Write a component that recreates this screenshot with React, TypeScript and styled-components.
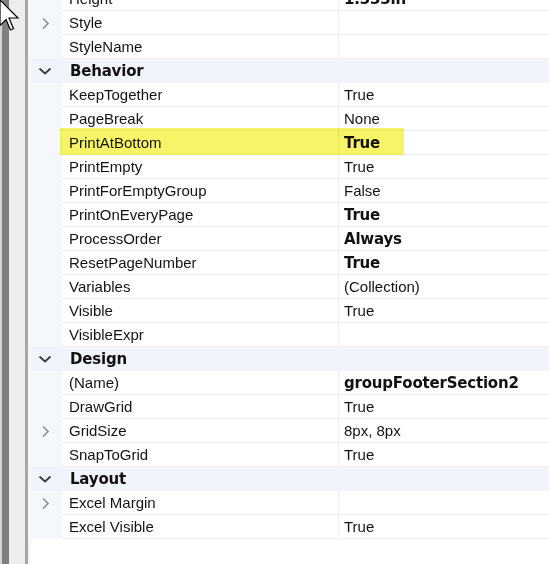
import React from "react";
import styled, { createGlobalStyle } from "styled-components";

const GlobalStyle = createGlobalStyle`
    html, body {
        margin: 0;
        padding: 0;
        background: #fff;
    }
    body {
        font-family: "Liberation Sans", Arial, sans-serif;
        font-size: 15px;
        color: #141414;
    }
`;

const Page = styled.div`
    display: flex;
    width: 549px;
    height: 564px;
    overflow: hidden;
    position: relative;
    background: #fff;
`;

const SideStrip = styled.div`
    flex: 0 0 31px;
    background: linear-gradient(
        to right,
        #d4d4d4 0 2px,
        #7f7f7f 2px 9px,
        #ededed 9px 25px,
        #a6a6a6 25px 28px,
        #f6f6f6 28px 31px
    );
`;

const Grid = styled.div`
    flex: 1;
    position: relative;
    overflow: hidden;
`;

const List = styled.div`
    margin-top: -13px;
`;

const Row = styled.div<{ category?: boolean }>`
    display: grid;
    grid-template-columns: 31px 277px 1fr;
    height: 24px;
    line-height: 24px;
    background: ${p => (p.category ? "#f1f5fb" : "#fff")};
    white-space: nowrap;
`;

const Gutter = styled.div`
    background: #f4f7fc;
    display: flex;
    align-items: center;
    justify-content: center;
    padding-right: 2px;
`;

const CategoryGutter = styled(Gutter)`
    background: transparent;
    padding-right: 4px;
`;

const NameCell = styled.div`
    padding-left: 7px;
    border-bottom: 1px solid #f0f1f3;
    border-right: 1px solid #eeeff2;
    overflow: hidden;
`;

const ValueCell = styled.div<{ bold?: boolean }>`
    padding-left: 5px;
    border-bottom: 1px solid #f0f1f3;
    overflow: hidden;
    ${p =>
        p.bold &&
        `
        font-family: "DejaVu Sans", Verdana, sans-serif;
        font-weight: bold;
        font-size: 15px;
        color: #111;
        letter-spacing: -0.2px;
    `}
`;

const CategoryName = styled.div`
    grid-column: 2 / 4;
    padding-left: 8px;
    font-family: "DejaVu Sans", Verdana, sans-serif;
    font-weight: bold;
    font-size: 15px;
    color: #111;
    letter-spacing: -0.2px;
`;

const Highlight = styled.div`
    position: absolute;
    left: 29px;
    top: 128px;
    width: 344px;
    height: 27px;
    background: #f8f35a;
    mix-blend-mode: multiply;
    filter: blur(0.6px);
    opacity: 0.92;
    pointer-events: none;
`;

const Cursor = styled.svg`
    position: absolute;
    left: -1px;
    top: -1px;
    pointer-events: none;
`;

type Prop = {
    name: string;
    value?: string;
    bold?: boolean;
    expandable?: boolean;
};

type Category = {
    title?: string;
    items: Prop[];
};

const sections: Category[] = [
    {
        items: [
            { name: "Height", value: "1.333in", bold: true },
            { name: "Style", expandable: true },
            { name: "StyleName" },
        ],
    },
    {
        title: "Behavior",
        items: [
            { name: "KeepTogether", value: "True" },
            { name: "PageBreak", value: "None" },
            { name: "PrintAtBottom", value: "True", bold: true },
            { name: "PrintEmpty", value: "True" },
            { name: "PrintForEmptyGroup", value: "False" },
            { name: "PrintOnEveryPage", value: "True", bold: true },
            { name: "ProcessOrder", value: "Always", bold: true },
            { name: "ResetPageNumber", value: "True", bold: true },
            { name: "Variables", value: "(Collection)" },
            { name: "Visible", value: "True" },
            { name: "VisibleExpr" },
        ],
    },
    {
        title: "Design",
        items: [
            { name: "(Name)", value: "groupFooterSection2", bold: true },
            { name: "DrawGrid", value: "True" },
            { name: "GridSize", value: "8px, 8px", expandable: true },
            { name: "SnapToGrid", value: "True" },
        ],
    },
    {
        title: "Layout",
        items: [
            { name: "Excel Margin", expandable: true },
            { name: "Excel Visible", value: "True" },
        ],
    },
];

const ChevronRight = () => (
    <svg width="9" height="13" viewBox="0 0 9 13">
        <path d="M2 1.5 L7 6.5 L2 11.5" fill="none" stroke="#8e8e8e" strokeWidth="1.6" />
    </svg>
);

const ChevronDown = () => (
    <svg width="14" height="8" viewBox="0 0 14 8">
        <path d="M1.5 1.5 L7 6.5 L12.5 1.5" fill="none" stroke="#3a3a3a" strokeWidth="1.8" />
    </svg>
);

const App: React.FC = () => {
    return <>
        <GlobalStyle />
        <Page>
            <SideStrip />
            <Grid>
                <List>
                    {sections.map((section, si) => (
                        <React.Fragment key={si}>
                            {section.title && (
                                <Row category>
                                    <CategoryGutter>
                                        <ChevronDown />
                                    </CategoryGutter>
                                    <CategoryName>{section.title}</CategoryName>
                                </Row>
                            )}
                            {section.items.map(item => (
                                <Row key={item.name}>
                                    <Gutter>{item.expandable && <ChevronRight />}</Gutter>
                                    <NameCell>{item.name}</NameCell>
                                    <ValueCell bold={item.bold}>{item.value}</ValueCell>
                                </Row>
                            ))}
                        </React.Fragment>
                    ))}
                </List>
                <Highlight />
            </Grid>
            <Cursor width="22" height="32" viewBox="0 0 22 32">
                <path
                    d="M1 1 L1 26.5 L7 20.5 L11.5 31 L14.5 29.5 L10 19 L19 19 Z"
                    fill="#fff"
                    stroke="#000"
                    strokeWidth="1.2"
                    strokeLinejoin="miter"
                />
            </Cursor>
        </Page>
    </>;
};

export default App;
